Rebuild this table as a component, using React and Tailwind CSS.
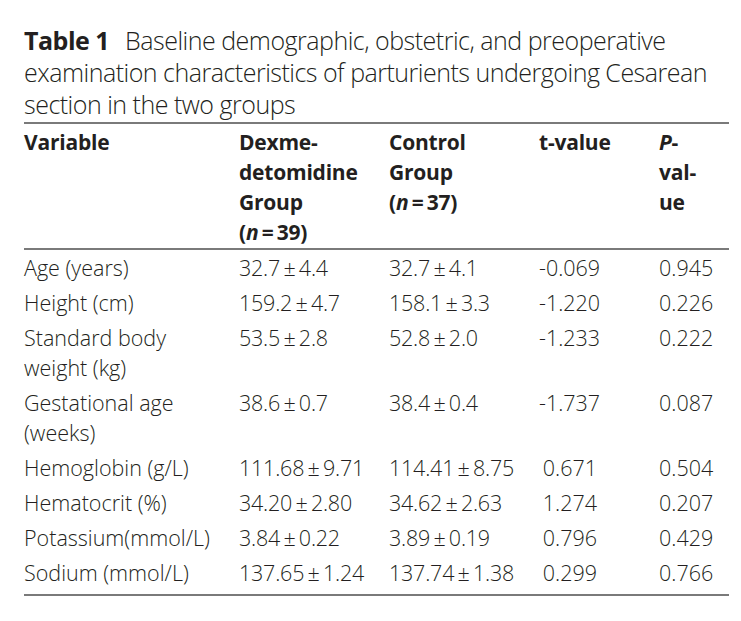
import React from "react";

const pm = "\u2009±\u2009";

const rows = [
  ["Age (years)", `32.7${pm}4.4`, `32.7${pm}4.1`, "-0.069", "0.945"],
  ["Height (cm)", `159.2${pm}4.7`, `158.1${pm}3.3`, "-1.220", "0.226"],
  ["Standard body weight (kg)", `53.5${pm}2.8`, `52.8${pm}2.0`, "-1.233", "0.222"],
  ["Gestational age (weeks)", `38.6${pm}0.7`, `38.4${pm}0.4`, "-1.737", "0.087"],
  ["Hemoglobin (g/L)", `111.68${pm}9.71`, `114.41${pm}8.75`, "0.671", "0.504"],
  ["Hematocrit (%)", `34.20${pm}2.80`, `34.62${pm}2.63`, "1.274", "0.207"],
  ["Potassium(mmol/L)", `3.84${pm}0.22`, `3.89${pm}0.19`, "0.796", "0.429"],
  ["Sodium (mmol/L)", `137.65${pm}1.24`, `137.74${pm}1.38`, "0.299", "0.766"],
];

const cols = "grid grid-cols-[215px_150px_150px_120px_70px]";

export default function App() {
  return (
    <div
      className="bg-white text-[#231f20] pl-[24px] pr-[12px] pt-[24px] w-[741px] h-[621px]"
      style={{ fontFamily: '"Open Sans", "Noto Sans", sans-serif' }}
    >
      <h1 className="text-[25px] leading-[32px] tracking-[-0.02em] font-light">
        <span className="font-bold mr-[16px]">Table 1</span>
        Baseline demographic, obstetric, and preoperative examination characteristics of parturients undergoing Cesarean section in the two groups
      </h1>

      <div className="mt-[2px] w-[705px] border-t-2 border-b-2 border-[#7a7a7a]">
        <div className={`${cols} pt-[3px] pb-[1px] border-b-2 border-[#7a7a7a] text-[21px] leading-[30px] font-bold tracking-[-0.01em]`}>
          <div>Variable</div>
          <div>
            Dexme-
            <br />
            detomidine
            <br />
            Group
            <br />(<i>n</i>{"\u2009=\u2009"}39)
          </div>
          <div>
            Control
            <br />
            Group
            <br />(<i>n</i>{"\u2009=\u2009"}37)
          </div>
          <div>t-value</div>
          <div>
            <i>P</i>-
            <br />
            val-
            <br />
            ue
          </div>
        </div>

        <div className="pt-[3px] pb-[1px] text-[21.5px] leading-[30px] font-light">
          {rows.map((r) => (
            <div key={r[0]} className={`${cols} pb-[5px]`}>
              <div className="pr-[20px]">{r[0]}</div>
              <div className="tracking-[-0.01em]">{r[1]}</div>
              <div className="tracking-[-0.01em]">{r[2]}</div>
              <div>
                <span className="inline-block w-[58px] text-right">{r[3]}</span>
              </div>
              <div>{r[4]}</div>
            </div>
          ))}
        </div>
      </div>
    </div>
  );
}
